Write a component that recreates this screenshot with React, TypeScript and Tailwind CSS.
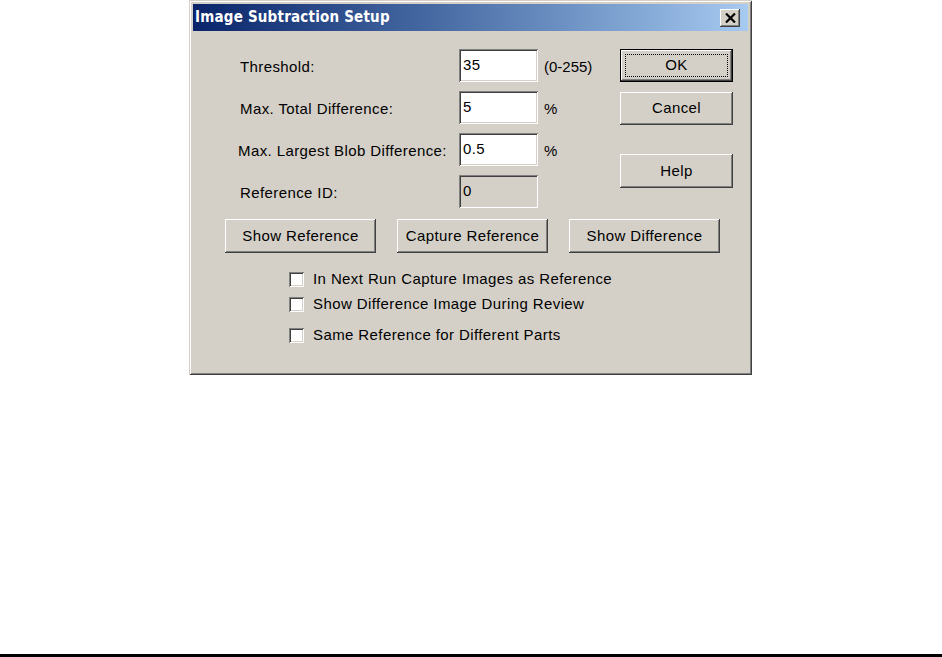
import type { ReactNode } from 'react'

const raised =
  'bg-[#d4d0c8] shadow-[inset_-1px_-1px_#404040,inset_1px_1px_#ffffff,inset_-2px_-2px_#808080,inset_2px_2px_#d4d0c8]'
const sunken =
  'shadow-[inset_1px_1px_#808080,inset_-1px_-1px_#ffffff,inset_2px_2px_#404040,inset_-2px_-2px_#d4d0c8]'

function Button({ children, className = '', isDefault }: { children: ReactNode; className?: string; isDefault?: boolean }) {
  if (isDefault) {
    return (
      <div className={`border border-black ${className}`}>
        <div className={`${raised} h-full flex items-center justify-center p-[4px]`}>
          <div className="w-full h-full flex items-center justify-center border border-dotted border-black">
            {children}
          </div>
        </div>
      </div>
    )
  }
  return <div className={`${raised} flex items-center justify-center ${className}`}>{children}</div>
}

function Field({ value, disabled }: { value: string; disabled?: boolean }) {
  return (
    <div
      className={`w-[79px] h-[33px] flex items-center pl-[4px] ${sunken} ${disabled ? 'bg-[#d4d0c8]' : 'bg-white'}`}
    >
      {value}
    </div>
  )
}

function Check({ label, className = '' }: { label: string; className?: string }) {
  return (
    <div className={`flex items-center h-[20px] ${className}`}>
      <div className={`w-[15px] h-[15px] bg-white ${sunken}`} />
      <span className="ml-[9px]">{label}</span>
    </div>
  )
}

const rows = [
  { label: 'Threshold:', value: '35', suffix: '(0-255)' },
  { label: 'Max. Total Difference:', value: '5', suffix: '%' },
  { label: 'Max. Largest Blob Difference:', value: '0.5', suffix: '%', shift: true },
  { label: 'Reference ID:', value: '0', disabled: true },
]

export default function App() {
  return (
    <div
      className="w-[942px] h-[657px] bg-white flex flex-col text-black text-[15px] tracking-[0.4px]"
      style={{ fontFamily: '"Liberation Sans", Arial, sans-serif' }}
    >
      {/* Dialog window */}
      <div className="ml-[189px] w-[563px] h-[375px] bg-[#d4d0c8] p-[4px] shadow-[inset_1px_1px_#d4d0c8,inset_-1px_-1px_#404040,inset_2px_2px_#ffffff,inset_-2px_-2px_#808080] flex flex-col">
        {/* Title bar */}
        <div className="h-[27px] bg-gradient-to-r from-[#0a246a] to-[#a6caf0] flex items-center pl-[2px] pr-[8px]">
          <span
            className="text-white font-bold text-[15px] tracking-[0.2px] flex-1"
            style={{ fontFamily: '"DejaVu Sans Condensed", "DejaVu Sans", sans-serif' }}
          >
            Image Subtraction Setup
          </span>
          <div className={`${raised} w-[20px] h-[18px] flex items-center justify-center`}>
            <svg width="11" height="10" viewBox="0 0 11 10">
              <path d="M1 0.5 L10 9.5 M10 0.5 L1 9.5" stroke="#000" strokeWidth="2.2" />
            </svg>
          </div>
        </div>

        {/* Fields + side buttons */}
        <div className="flex pt-[18px]">
          <div className="w-[427px] pl-[47px] flex flex-col gap-[9px]">
            {rows.map((r) => (
              <div key={r.label} className="flex items-center h-[33px]">
                <span className={`pt-[3px] ${r.shift ? 'w-[221px] -ml-[2px]' : 'w-[219px]'}`}>{r.label}</span>
                <Field value={r.value} disabled={r.disabled} />
                {r.suffix && <span className="ml-[6px] pt-[3px] tracking-normal">{r.suffix}</span>}
              </div>
            ))}
          </div>
          <div className="w-[113px] flex flex-col">
            <Button isDefault className="h-[33px]">OK</Button>
            <Button className="h-[33px] mt-[10px]">Cancel</Button>
            <Button className="h-[34px] mt-[29px]">Help</Button>
          </div>
        </div>

        {/* Reference buttons */}
        <div className="flex pl-[32px] gap-[21px] mt-[11px]">
          <Button className="w-[151px] h-[34px]">Show Reference</Button>
          <Button className="w-[151px] h-[34px]">Capture Reference</Button>
          <Button className="w-[151px] h-[34px]">Show Difference</Button>
        </div>

        {/* Options */}
        <div className="flex flex-col pl-[96px] mt-[16px]">
          <Check label="In Next Run Capture Images as Reference" />
          <Check label="Show Difference Image During Review" className="mt-[5px]" />
          <Check label="Same Reference for Different Parts" className="mt-[11px]" />
        </div>
      </div>

      <div className="mt-auto h-[3px] bg-black" />
    </div>
  )
}
